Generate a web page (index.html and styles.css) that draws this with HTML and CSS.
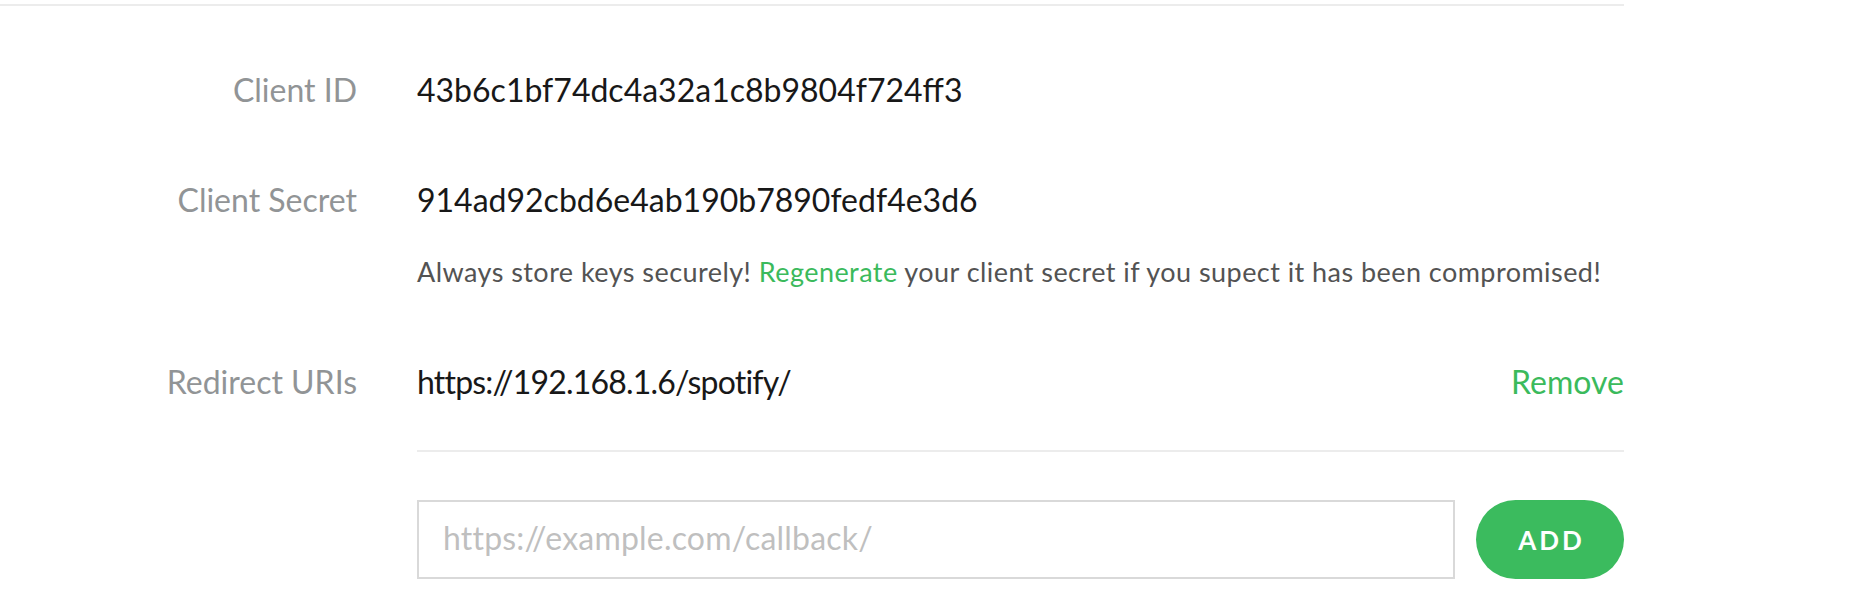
FILE: index.html
```html
<!DOCTYPE html>
<html lang="en">
<head>
<meta charset="utf-8">
<title>App settings</title>
<link rel="stylesheet" href="styles.css">
</head>
<body>
<div class="page">
  <div class="topline"></div>
  <div class="field field-id">
    <div class="label">Client ID</div>
    <div class="value">43b6c1bf74dc4a32a1c8b9804f724ff3</div>
  </div>
  <div class="field field-secret">
    <div class="label">Client Secret</div>
    <div class="value">914ad92cbd6e4ab190b7890fedf4e3d6</div>
  </div>
  <div class="field field-note">
    <div class="label"></div>
    <div class="note">Always store keys securely! <a class="link" href="#">Regenerate</a> your client secret if you supect it has been compromised!</div>
  </div>
  <div class="field field-uri">
    <div class="label">Redirect URIs</div>
    <div class="uri-row">
      <span class="value uri">https://192.168.1.6/spotify/</span>
      <a class="link remove" href="#">Remove</a>
    </div>
  </div>
  <div class="field field-sep">
    <div class="label"></div>
    <div class="separator"></div>
  </div>
  <div class="field field-add">
    <div class="label"></div>
    <div class="add-row">
      <input class="uri-input" type="text" placeholder="https://example.com/callback/">
      <button class="add-btn" type="button">ADD</button>
    </div>
  </div>
</div>
</body>
</html>
```
FILE: styles.css
```css
html, body {
  margin: 0;
  padding: 0;
  background: #ffffff;
}
body {
  font-family: Lato, "Liberation Sans", sans-serif;
  color: #181818;
}
.page {
  width: 1624px;
}
.topline {
  height: 2px;
  margin-top: 4px;
  background: #ececec;
}
.field {
  display: grid;
  grid-template-columns: 357px 1207px;
  column-gap: 60px;
  align-items: baseline;
}
.label {
  text-align: right;
  color: #919496;
  font-size: 32px;
  line-height: 40px;
}
.value {
  font-size: 32px;
  line-height: 40px;
  color: #181818;
}
.uri {
  letter-spacing: -0.8px;
}
.field-id {
  margin-top: 64px;
}
.field-secret {
  margin-top: 70px;
}
.field-note {
  margin-top: 36px;
}
.field-note .label {
  line-height: 32px;
}
.note {
  font-size: 27px;
  line-height: 32px;
  letter-spacing: 0.45px;
  color: #535353;
}
.link {
  color: #3bba5c;
  text-decoration: none;
}
.field-uri {
  margin-top: 74px;
}
.uri-row {
  display: flex;
  justify-content: space-between;
  align-items: baseline;
}
.remove {
  font-size: 32px;
  line-height: 40px;
}
.field-sep {
  margin-top: 48px;
  align-items: start;
}
.field-sep .label {
  line-height: 2px;
  height: 2px;
}
.separator {
  height: 2px;
  background: #ececec;
}
.field-add {
  margin-top: 48px;
  align-items: start;
}
.add-row {
  display: flex;
  align-items: center;
  gap: 21px;
}
.uri-input {
  box-sizing: border-box;
  width: 1038px;
  height: 79px;
  margin: 0;
  padding: 0 24px 4px 24px;
  border: 2px solid #d9d9d9;
  border-radius: 0;
  outline: none;
  font-family: Lato, "Liberation Sans", sans-serif;
  font-size: 32px;
  letter-spacing: 0.2px;
  color: #181818;
  background: #ffffff;
}
.uri-input::placeholder {
  color: #bfbfbf;
}
.add-btn {
  box-sizing: border-box;
  width: 148px;
  height: 79px;
  margin: 0;
  padding: 0 0 0 3px;
  border: none;
  border-radius: 40px;
  background: #3bbb5e;
  color: #ffffff;
  font-family: Lato, "Liberation Sans", sans-serif;
  font-weight: 700;
  font-size: 26px;
  letter-spacing: 3px;
}
```
